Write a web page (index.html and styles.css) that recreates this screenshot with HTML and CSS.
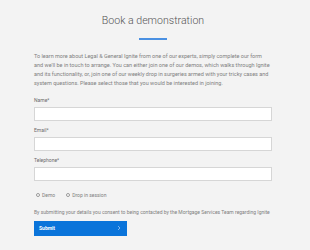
FILE: index.html
```html
<!DOCTYPE html>
<html lang="en">
<head>
    <meta charset="UTF-8">
    <meta name="viewport" content="width=device-width, initial-scale=1.0">
    <title>Book a demonstration</title>
    <link rel="stylesheet" href="styles.css">
</head>
<body>
    <main class="page">
        <h1 class="page-title">Book a demonstration</h1>
        <div class="title-rule"></div>

        <p class="intro">To learn more about Legal &amp; General Ignite from one of our experts, simply complete our form and we'll be in touch to arrange. You can either join one of our demos, which walks through Ignite and its functionality, or, join one of our weekly drop in surgeries armed with your tricky cases and system questions. Please select those that you would be interested in joining.</p>

        <form class="demo-form">
            <div class="field">
                <label for="name">Name*</label>
                <input type="text" id="name" name="name">
            </div>
            <div class="field">
                <label for="email">Email*</label>
                <input type="text" id="email" name="email">
            </div>
            <div class="field">
                <label for="phone">Telephone*</label>
                <input type="text" id="phone" name="phone">
            </div>

            <div class="options">
                <label class="option"><span class="radio"></span>Demo</label>
                <label class="option"><span class="radio"></span>Drop in session</label>
            </div>

            <p class="consent">By submitting your details you consent to being contacted by the Mortgage Services Team regarding Ignite</p>

            <button type="button" class="submit">
                <span>Submit</span>
                <svg class="chevron" width="4" height="6" viewBox="0 0 4 6"><path d="M1 1 L3 3 L1 5" fill="none" stroke="#9cc8f2" stroke-width="0.8"/></svg>
            </button>
        </form>
    </main>
</body>
</html>
```

FILE: styles.css
```css
/* Global */
body {
    margin: 0;
    background-color: #f3f3f3;
    font-family: Roboto, "Liberation Sans", sans-serif;
    color: #808080;
}

.page {
    width: 238px;
    padding: 14px 0 0 34px;
}

/* Heading */
.page-title {
    margin: 0;
    font-size: 10.6px;
    line-height: 14px;
    font-weight: 300;
    color: #555;
    text-align: center;
}

.title-rule {
    width: 28px;
    height: 2px;
    margin: 10px auto 0;
    background-color: #4a90e2;
}

.intro {
    margin: 12px 0 0;
    font-size: 5.5px;
    line-height: 9px;
}

/* Form */
.demo-form {
    margin-top: 8.5px;
}

.field {
    margin-bottom: 5.5px;
}

.field label {
    display: block;
    margin-bottom: 3.5px;
    font-size: 5px;
    line-height: 7px;
    color: #6a6a6a;
}

.field input {
    display: block;
    box-sizing: border-box;
    width: 100%;
    height: 14px;
    margin: 0;
    border: 1px solid #d6d6d6;
    background-color: #fff;
}

.options {
    display: flex;
    gap: 11px;
    margin-top: 10px;
    padding-left: 2px;
    font-size: 5px;
    line-height: 8px;
}

.option {
    display: flex;
    align-items: center;
    gap: 2px;
}

.radio {
    box-sizing: border-box;
    width: 4px;
    height: 4px;
    border: 0.6px solid #999;
    border-radius: 50%;
    background-color: #fff;
}

.consent {
    margin: 8.7px 0 0;
    font-size: 5px;
    line-height: 8px;
    white-space: nowrap;
}

.submit {
    display: flex;
    justify-content: space-between;
    align-items: center;
    box-sizing: border-box;
    width: 93px;
    height: 15px;
    margin-top: 5.3px;
    padding: 0 6px 0 5px;
    border: none;
    background-color: #0a74da;
    color: #fff;
    font-family: Roboto, "Liberation Sans", sans-serif;
    font-size: 5px;
    font-weight: 700;
}
```
